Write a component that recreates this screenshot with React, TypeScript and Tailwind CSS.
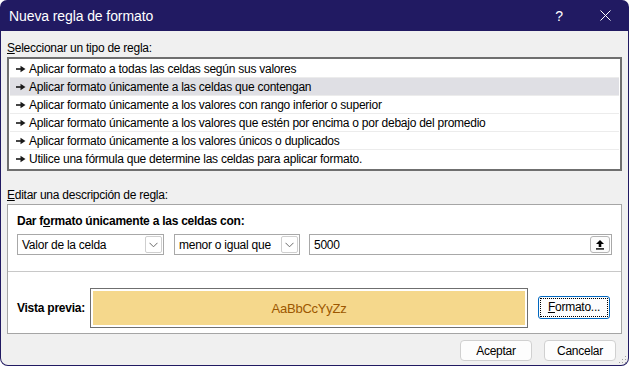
import React from "react";

const Arrow = () => (
  <svg width="10" height="8" viewBox="0 0 10 8" className="shrink-0">
    <rect x="0" y="3.2" width="5" height="1.6" fill="#1a1a1a" />
    <polygon points="4.5,0.8 9.5,4 4.5,7.2" fill="#1a1a1a" />
  </svg>
);

const Chevron = () => (
  <svg width="9" height="6" viewBox="0 0 9 6">
    <polyline points="0.5,0.8 4.5,4.8 8.5,0.8" fill="none" stroke="#6b6b6b" strokeWidth="1" />
  </svg>
);

const rows = [
  "Aplicar formato a todas las celdas según sus valores",
  "Aplicar formato únicamente a las celdas que contengan",
  "Aplicar formato únicamente a los valores con rango inferior o superior",
  "Aplicar formato únicamente a los valores que estén por encima o por debajo del promedio",
  "Aplicar formato únicamente a los valores únicos o duplicados",
  "Utilice una fórmula que determine las celdas para aplicar formato.",
];

export default function App() {
  return (
    <div className="w-[629px] h-[366px] bg-white font-['Liberation_Sans',sans-serif] text-[12px] tracking-[-0.25px] text-black leading-none">
      <div className="relative w-full h-full bg-[#211a62] rounded-b-[8px] rounded-t-[7px] flex flex-col px-[1px] pb-[1px]">
        {/* Title bar */}
        <div className="h-[31px] flex items-center pl-[8px] text-white shrink-0">
          <span className="text-[14px] tracking-[-0.1px]">Nueva regla de formato</span>
          <div className="ml-auto flex items-center">
            <span className="w-[46px] text-center text-[14px] font-light">?</span>
            <div className="w-[46px] flex justify-center">
              <svg width="11" height="11" viewBox="0 0 11 11">
                <path d="M0.5 0.5 L10.5 10.5 M10.5 0.5 L0.5 10.5" stroke="white" strokeWidth="1" />
              </svg>
            </div>
          </div>
        </div>

        {/* Body */}
        <div className="flex-1 bg-[#f0f0f0] rounded-b-[7px] px-[6px] flex flex-col">
          <div className="mt-[9px] h-[16px] flex items-center">
            <span><span className="underline">S</span>eleccionar un tipo de regla:</span>
          </div>

          <div className="mt-[1px] border-2 border-[#6f6f6f] bg-white pt-[1px] pb-[1px] px-[1px]">
            {rows.map((r, i) => (
              <div
                key={i}
                className={
                  "h-[18px] flex items-center gap-[3px] pl-[6px] " +
                  (i === 1 ? "bg-[#dfdfe4] " : "") +
                  (i < rows.length - 1 ? "border-b border-[#ececec]" : "")
                }
              >
                <Arrow />
                <span>{r}</span>
              </div>
            ))}
          </div>

          <div className="mt-[16px] h-[16px] flex items-center">
            <span><span className="underline">E</span>ditar una descripción de regla:</span>
          </div>

          <div className="mt-[1px] border border-[#a5a5a5] bg-white flex flex-col">
            <div className="px-[9px] pt-[8px] pb-[16px] border-b border-[#c8c8c8]">
              <div className="h-[16px] flex items-center font-bold">
                <span>Dar f<span className="underline">o</span>rmato únicamente a las celdas con:</span>
              </div>
              <div className="mt-[5px] flex items-center">
                <div className="w-[147px] h-[21px] border border-[#a8a8a8] flex items-center pl-[4px] pr-[1px]">
                  <span>Valor de la celda</span>
                  <div className="ml-auto w-[17px] h-[17px] border border-[#cfcfcf] rounded-[2px] flex items-center justify-center">
                    <Chevron />
                  </div>
                </div>
                <div className="ml-[10px] w-[126px] h-[21px] border border-[#a8a8a8] flex items-center pl-[4px] pr-[1px]">
                  <span>menor o igual que</span>
                  <div className="ml-auto w-[17px] h-[17px] border border-[#cfcfcf] rounded-[2px] flex items-center justify-center">
                    <Chevron />
                  </div>
                </div>
                <div className="ml-[9px] w-[303px] h-[21px] border border-[#a8a8a8] flex items-center pl-[4px] pr-[1px]">
                  <span>5000</span>
                  <div className="ml-auto w-[20px] h-[17px] border border-[#b5b5b5] rounded-[3px] bg-[#fcfcfc] flex items-center justify-center">
                    <svg width="10" height="11" viewBox="0 0 10 11">
                      <path d="M5 1 L9 5 H6.3 V8 H3.7 V5 H1 Z" fill="#000" />
                      <rect x="1" y="9.2" width="8" height="1.4" fill="#000" />
                    </svg>
                  </div>
                </div>
              </div>
            </div>
            <div className="pl-[9px] pr-[11px] pt-[16px] pb-[5px] flex items-center">
              <span className="font-bold w-[73px]">Vista previa:</span>
              <div className="w-[438px] h-[40px] border border-[#6f6f6f] p-[2px]">
                <div className="w-full h-full bg-[#f5d88c] flex items-center justify-center text-[#9c5700] text-[13px]">
                  AaBbCcYyZz
                </div>
              </div>
              <div className="ml-auto w-[72px] h-[23px] border border-[#0067c0] rounded-[3px] bg-[#fdfdfd] p-[1px] mb-[2px]">
                <div className="w-full h-full border border-dotted border-black flex items-center justify-center">
                  <span><span className="underline">F</span>ormato...</span>
                </div>
              </div>
            </div>
          </div>

          <div className="mt-[6px] flex justify-end gap-[12px] pr-[6px]">
            <div className="w-[72px] h-[21px] border border-[#d0d0d0] rounded-[4px] bg-[#fdfdfd] flex items-center justify-center">
              Aceptar
            </div>
            <div className="w-[72px] h-[21px] border border-[#d0d0d0] rounded-[4px] bg-[#fdfdfd] flex items-center justify-center">
              Cancelar
            </div>
          </div>
        </div>

        {/* resize grip */}
        <svg className="absolute right-[2px] bottom-[2px]" width="8" height="8" viewBox="0 0 8 8">
          <rect x="6" y="0" width="1" height="1" fill="#a0a0a0" />
          <rect x="3" y="3" width="1" height="1" fill="#a0a0a0" />
          <rect x="6" y="3" width="1" height="1" fill="#a0a0a0" />
          <rect x="0" y="6" width="1" height="1" fill="#a0a0a0" />
          <rect x="3" y="6" width="1" height="1" fill="#a0a0a0" />
          <rect x="6" y="6" width="1" height="1" fill="#a0a0a0" />
        </svg>
      </div>
    </div>
  );
}
